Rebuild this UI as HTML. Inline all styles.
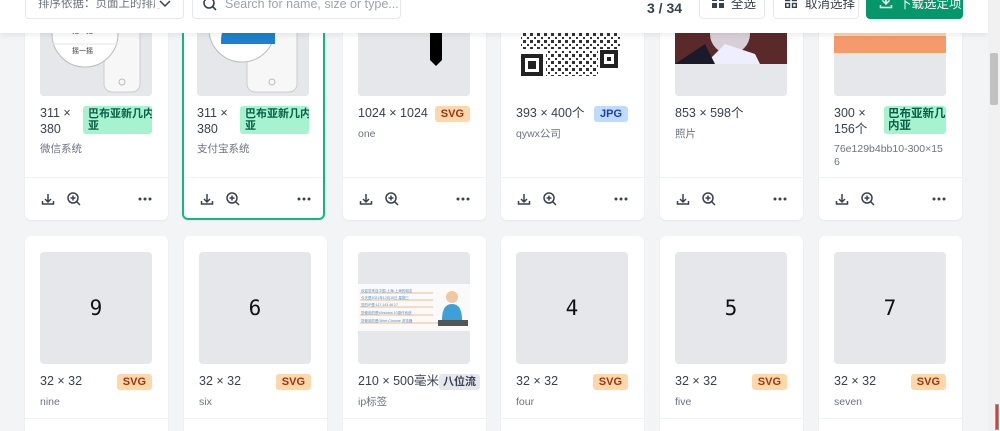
<!DOCTYPE html>
<html style="width:1000px;height:431px;overflow:hidden"><head><meta charset="utf-8"><style>
*{box-sizing:border-box;margin:0;padding:0}
body{width:1000px;height:431px;overflow:hidden;background:#f3f4f6;font-family:"Liberation Sans","Noto Sans CJK SC",sans-serif;position:relative;color:#374151}
.card{position:absolute;width:143px;height:252px;background:#fff;border-radius:6px;box-shadow:0 1px 2px rgba(0,0,0,.06);overflow:hidden}
.r2{height:195px;border-radius:6px 6px 0 0}
.card.sel{border:2px solid #10b981}
.img{position:absolute;left:15px;top:16px;width:112px;height:112px;background:#e5e7eb;border-radius:4px;overflow:hidden}
.sel .img{left:13px;top:14px}
.info{position:absolute;left:15px;top:138px;width:112px;font-size:12.5px;line-height:15.5px;color:#374151}
.sel .info{left:13px;top:136px}
.row{display:flex;justify-content:space-between;align-items:flex-start}
.dim{flex:0 1 auto}
.badge{font-size:11px;font-weight:bold;border-radius:3px;padding:0 6px;line-height:14px;flex:0 0 auto;white-space:nowrap}
.b-g{background:#a7f3d0;color:#065f46;line-height:12px;padding:2px 4px 2px 5px;width:69px;font-size:11px;overflow:hidden}
.b-o{background:#fed7aa;color:#9a3412;padding:1px 6px}
.b-b{background:#bfdbfe;color:#1e40af;padding:1px 6px}
.b-gr{background:#e5e7eb;color:#374151;padding:1px 4px}
.name{font-size:10.5px;color:#6b7280;margin-top:6px;line-height:13px;word-break:break-all}
.foot{position:absolute;left:0;right:0;top:209px;height:42px;border-top:1px solid #f0f1f3}
.r2 .foot{top:182px;height:13px}
.hdr{position:absolute;left:0;top:0;width:988px;height:33px;background:#fff;box-shadow:0 2px 6px rgba(0,0,0,.08)}
.box{position:absolute;top:-10px;height:29px;border:1px solid #e5e7eb;border-radius:4px;background:#fff;font-size:12.5px;color:#6b7280;white-space:nowrap;overflow:hidden}
.num{display:flex;align-items:center;justify-content:center;font-size:21px;font-family:"DejaVu Sans Mono",monospace;color:#111}
</style></head><body>

<!-- Row 1 -->
<div class="card" style="left:25px;top:-32px">
 <div class="img"><svg width="112" height="112"><rect width="112" height="112" fill="#e5e7eb"/><rect x="64" y="10" width="36" height="98" rx="8" fill="#f7f7f7" stroke="#ccc"/><circle cx="82" cy="98" r="3" fill="none" stroke="#bbb"/><circle cx="45" cy="50" r="33" fill="#fff" stroke="#bbb"/><line x1="12" y1="60" x2="78" y2="60" stroke="#e5e5e5"/><rect x="18" y="42" width="6" height="6" fill="#1e88e5"/><text x="32" y="49" font-size="7" fill="#333" font-family="Noto Sans CJK SC">扫一扫</text><text x="32" y="69" font-size="7" fill="#333" font-family="Noto Sans CJK SC">摇一摇</text></svg></div>
 <div class="info"><div class="row"><span class="dim">311 ×<br>380</span><span class="badge b-g">巴布亚新几内<br>亚</span></div><div class="name">微信系统</div></div>
 <div class="foot"></div>
</div>
<div class="card sel" style="left:182px;top:-32px">
 <div class="img"><svg width="112" height="112"><rect width="112" height="112" fill="#e5e7eb"/><rect x="50" y="10" width="50" height="98" rx="8" fill="#f7f7f7" stroke="#ccc"/><circle cx="75" cy="98" r="3" fill="none" stroke="#bbb"/><circle cx="45" cy="45" r="33" fill="#fff" stroke="#bbb"/><path d="M12 12 H78 V60 H12 Z" fill="#1e7fd0" clip-path="circle(33px at 45px 45px)"/><text x="20" y="48" font-size="5" fill="#fff">扫一扫</text><text x="58" y="48" font-size="5" fill="#fff">付钱</text></svg></div>
 <div class="info"><div class="row"><span class="dim">311 ×<br>380</span><span class="badge b-g">巴布亚新几内<br>亚</span></div><div class="name">支付宝系统</div></div>
 <div class="foot" style="top:207px"></div>
</div>
<div class="card" style="left:343px;top:-32px">
 <div class="img"><svg width="112" height="112"><rect width="112" height="112" fill="#e5e7eb"/><path d="M72 0 H84 V76 L78 82 L72 76 V48 L76 44 V32 H72 Z" fill="#000"/></svg></div>
 <div class="info"><div class="row"><span class="dim">1024 × 1024</span><span class="badge b-o">SVG</span></div><div class="name">one</div></div>
 <div class="foot"></div>
</div>
<div class="card" style="left:501px;top:-32px">
 <div class="img" style="background:#fff"><svg width="112" height="112"><defs><pattern id="q" width="7" height="7" patternUnits="userSpaceOnUse"><rect width="3" height="3" fill="#333"/><rect x="4" y="4" width="2" height="2" fill="#333"/></pattern></defs><rect width="112" height="112" fill="#fff"/><rect x="5" y="10" width="100" height="55" fill="url(#q)"/><rect x="30" y="66" width="52" height="26" fill="url(#q)"/><rect x="5" y="70" width="22" height="22" fill="#222"/><rect x="84" y="66" width="18" height="18" fill="#222"/><rect x="9" y="74" width="14" height="14" fill="#fff"/><rect x="12" y="77" width="8" height="8" fill="#222"/><rect x="88" y="70" width="10" height="10" fill="#fff"/><rect x="91" y="73" width="4" height="4" fill="#222"/></svg></div>
 <div class="info"><div class="row"><span class="dim">393 × 400个</span><span class="badge b-b">JPG</span></div><div class="name">qywx公司</div></div>
 <div class="foot"></div>
</div>
<div class="card" style="left:660px;top:-32px">
 <div class="img"><svg width="112" height="112"><rect width="112" height="112" fill="#e5e7eb"/><rect y="0" width="112" height="80" fill="#5a2a2a"/><circle cx="55" cy="50" r="20" fill="#d8cfd6"/><path d="M30 80 L50 60 L80 70 L85 80Z" fill="#eef"/><path d="M0 80 L30 60 L40 80Z" fill="#1a1a2a"/></svg></div>
 <div class="info"><div class="row"><span class="dim">853 × 598个</span></div><div class="name">照片</div></div>
 <div class="foot"></div>
</div>
<div class="card" style="left:819px;top:-32px">
 <div class="img"><svg width="112" height="112"><rect width="112" height="112" fill="#e5e7eb"/><rect width="112" height="69" fill="#fbd5b5"/><rect y="52" width="112" height="17" fill="#f59a6a"/><text x="20" y="32" font-size="11" font-weight="bold" fill="#e53935">WordPress</text><text x="14" y="46" font-size="8" fill="#e53935" font-family="Noto Sans CJK SC">添加滚动播报小工具</text></svg></div>
 <div class="info"><div class="row"><span class="dim">300 ×<br>156个</span><span class="badge b-g" style="width:62px;font-size:11.5px;padding:2px 4px">巴布亚新几<br>内亚</span></div><div class="name">76e129b4bb10-300×156</div></div>
 <div class="foot"></div>
</div>

<!-- Row 2 -->
<div class="card r2" style="left:25px;top:236px"><div class="img num">9</div><div class="info"><div class="row"><span>32 × 32</span><span class="badge b-o">SVG</span></div><div class="name">nine</div></div><div class="foot"></div></div>
<div class="card r2" style="left:184px;top:236px"><div class="img num">6</div><div class="info"><div class="row"><span>32 × 32</span><span class="badge b-o">SVG</span></div><div class="name">six</div></div><div class="foot"></div></div>
<div class="card r2" style="left:343px;top:236px"><div class="img"><svg width="112" height="112"><rect width="112" height="112" fill="#e5e7eb"/><rect y="32" width="112" height="47" fill="#fafafa"/><g stroke="#f5b88a" stroke-width="1"><line x1="2" y1="41" x2="75" y2="41"/><line x1="2" y1="48" x2="75" y2="48"/><line x1="2" y1="55" x2="75" y2="55"/><line x1="2" y1="63" x2="75" y2="63"/><line x1="2" y1="71" x2="80" y2="71"/></g><g fill="#4a90d9" font-size="3.5"><text x="3" y="40">欢迎您来自中国-上海-上海的朋友</text><text x="3" y="47">今天是2021年12月15日 星期三</text><text x="3" y="54">您的IP是:117.143.46.17</text><text x="3" y="62">您使用的是Windows 10操作系统</text><text x="3" y="70">您使用的是Other-Chrome 浏览器</text></g><circle cx="94" cy="45" r="6" fill="#f1c7a0"/><path d="M84 68 Q84 52 94 52 Q104 52 104 68Z" fill="#3da0d8"/><rect x="80" y="68" width="30" height="6" fill="#555"/></svg></div><div class="info" style="width:116px"><div class="row"><span style="white-space:nowrap">210 × 500毫米</span><span class="badge b-gr">八位流</span></div><div class="name">ip标签</div></div><div class="foot"></div></div>
<div class="card r2" style="left:501px;top:236px"><div class="img num">4</div><div class="info"><div class="row"><span>32 × 32</span><span class="badge b-o">SVG</span></div><div class="name">four</div></div><div class="foot"></div></div>
<div class="card r2" style="left:660px;top:236px"><div class="img num">5</div><div class="info"><div class="row"><span>32 × 32</span><span class="badge b-o">SVG</span></div><div class="name">five</div></div><div class="foot"></div></div>
<div class="card r2" style="left:819px;top:236px"><div class="img num">7</div><div class="info"><div class="row"><span>32 × 32</span><span class="badge b-o">SVG</span></div><div class="name">seven</div></div><div class="foot"></div></div>

<!-- header -->
<div class="hdr">
 <div class="box" style="left:25px;width:159px;padding:0 8px 0 12px;line-height:27px;font-size:11.5px">排序依据：页面上的排序<svg style="position:absolute;right:12px;top:9px;background:#fff;box-shadow:-4px 0 0 #fff" width="12" height="8"><path d="M1 1 L6 6 L11 1" fill="none" stroke="#374151" stroke-width="1.5"/></svg></div>
 <div class="box" style="left:192px;width:209px;padding-left:32px;line-height:27px;color:#9ca3af">Search for name, size or type...<svg style="position:absolute;left:10px;top:6px" width="14" height="14"><circle cx="6" cy="6" r="5" fill="none" stroke="#374151" stroke-width="1.6"/><path d="M10 10 L13 13" stroke="#374151" stroke-width="1.6"/></svg></div>
 <div style="position:absolute;left:647px;top:0px;font-size:14px;font-weight:bold;color:#374151">3 / 34</div>
 <div class="box" style="left:699px;width:66px;padding-left:31px;line-height:27px;color:#374151">全选<svg style="position:absolute;left:12px;top:5px" width="12" height="12"><g fill="#374151"><rect width="5" height="5"/><rect x="7" width="5" height="5"/><rect y="7" width="5" height="5"/><rect x="7" y="7" width="5" height="5"/></g></svg></div>
 <div class="box" style="left:773px;width:86px;padding-left:31px;line-height:27px;color:#374151">取消选择<svg style="position:absolute;left:11px;top:5px" width="12" height="12"><g fill="none" stroke="#374151" stroke-width="1.4"><rect x=".7" y=".7" width="3.8" height="3.8"/><rect x="7.5" y=".7" width="3.8" height="3.8"/><rect x=".7" y="7.5" width="3.8" height="3.8"/><rect x="7.5" y="7.5" width="3.8" height="3.8"/></g></svg></div>
 <div class="box" style="left:866px;width:97px;background:#059669;border-color:#059669;color:#fff;padding-left:32px;line-height:27px">下载选定项<svg style="position:absolute;left:12px;top:4px" width="14" height="14"><path d="M7 1 V9 M3.5 5.5 L7 9 L10.5 5.5 M1.5 10 V12.5 H12.5 V10" fill="none" stroke="#fff" stroke-width="1.5"/></svg></div>
</div>

<!-- footer icons -->
<svg width="1000" height="431" style="position:absolute;left:0;top:0;pointer-events:none">
 <defs>
  <g id="ic">
   <path d="M0 0 V8 M-3 5 L0 8 L3 5 M-5.5 7 V10 H5.5 V7" fill="none" stroke="#374151" stroke-width="1.5"/>
   <circle cx="25" cy="4" r="5" fill="none" stroke="#374151" stroke-width="1.5"/><path d="M28.5 7.5 L32 11 M25 1.5 V6.5 M22.5 4 H27.5" stroke="#374151" stroke-width="1.5"/>
   <circle cx="92" cy="5" r="1.5" fill="#374151"/><circle cx="97" cy="5" r="1.5" fill="#374151"/><circle cx="102" cy="5" r="1.5" fill="#374151"/>
  </g>
 </defs>
 <use href="#ic" x="48" y="194"/><use href="#ic" x="207" y="194"/><use href="#ic" x="366" y="194"/><use href="#ic" x="524" y="194"/><use href="#ic" x="683" y="194"/><use href="#ic" x="842" y="194"/>
</svg>

<!-- scrollbar -->
<div style="position:absolute;left:988px;top:0;width:12px;height:431px;background:#f1f1f1"></div>
<div style="position:absolute;left:990px;top:53px;width:8px;height:52px;background:#c1c1c1;border-radius:2px"></div>
<div style="position:absolute;left:995px;top:404px;width:4px;height:26px;border:1px solid #999;background:#e53935"></div>
</body></html>
